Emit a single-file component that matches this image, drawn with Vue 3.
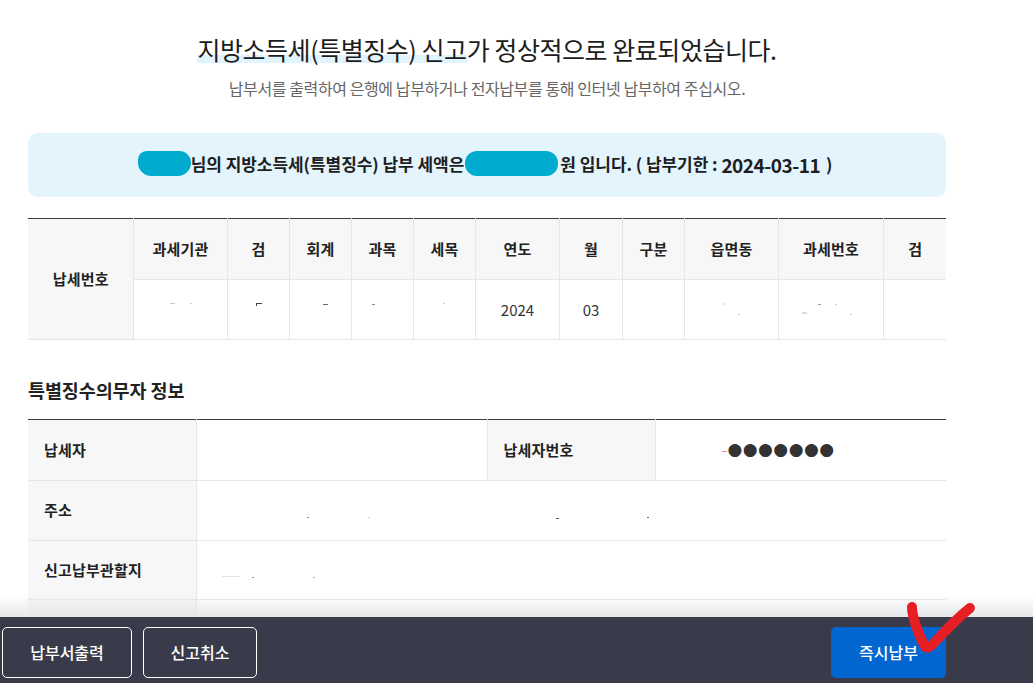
<script setup>
const heads = ['과세기관', '검', '회계', '과목', '세목', '연도', '월', '구분', '읍면동', '과세번호', '검']
const values = ['', '', '', '', '', '2024', '03', '', '', '', '']
const widths = [105, 94, 62, 62, 62, 62, 84, 63, 62, 94, 105, 63]
const specks = [
  [170, 303, 5, 1, '#ccc'], [190, 303, 2, 1, '#ccc'], [256, 303, 6, 1, '#444'], [256, 303, 1, 3, '#444'],
  [323, 304, 5, 1, '#666'], [372, 304, 3, 1, '#888'], [443, 303, 2, 1, '#ccc'], [724, 303, 1, 2, '#ccc'],
  [738, 314, 2, 1, '#bcd'], [802, 312, 5, 2, '#ddd'], [818, 304, 3, 1, '#999'], [835, 304, 2, 1, '#ccc'],
  [850, 314, 2, 1, '#ccc'], [307, 517, 2, 1, '#888'], [368, 517, 2, 1, '#ccc'], [556, 518, 3, 1, '#555'],
  [647, 517, 2, 1, '#667'], [222, 576, 18, 1, '#e4e4e4'], [252, 577, 2, 1, '#999'], [313, 577, 2, 1, '#bbb'],
  [722, 451, 5, 1, '#d99']
]
</script>

<template>
  <div class="page">
    <main class="content">
      <h1 class="title"><span class="mark">지방소득세(특별징수) 신고</span>가 정상적으로 완료되었습니다.</h1>
      <p class="sub">납부서를 출력하여 은행에 납부하거나 전자납부를 통해 인터넷 납부하여 주십시오.</p>

      <div class="notice">
        <span class="blob name"></span><span>님의 지방소득세(특별징수) 납부 세액은</span><span class="blob amount"></span><span>원 입니다. ( 납부기한 : </span><span class="date">2024-03-11</span><span class="paren"> )</span>
      </div>

      <table class="grid code">
        <colgroup>
          <col v-for="(w, i) in widths" :key="i" :style="{ width: w + 'px' }" />
        </colgroup>
        <tbody>
          <tr class="r1">
            <th rowspan="2">납세번호</th>
            <th v-for="(h, i) in heads" :key="i">{{ h }}</th>
          </tr>
          <tr class="r2">
            <td v-for="(v, i) in values" :key="i">{{ v }}</td>
          </tr>
        </tbody>
      </table>

      <h2 class="section">특별징수의무자 정보</h2>

      <table class="grid info">
        <colgroup>
          <col class="c1" /><col class="c2" /><col class="c3" /><col class="c4" />
        </colgroup>
        <tbody>
          <tr class="first-row">
            <th>납세자</th>
            <td></td>
            <th>납세자번호</th>
            <td class="masked"><span class="dots">●●●●●●●</span></td>
          </tr>
          <tr>
            <th>주소</th>
            <td colspan="3"></td>
          </tr>
          <tr class="third-row">
            <th>신고납부관할지</th>
            <td colspan="3"></td>
          </tr>
          <tr>
            <th></th>
            <td colspan="3"></td>
          </tr>
        </tbody>
      </table>
    </main>

    <i
      v-for="(s, i) in specks"
      :key="i"
      class="speck"
      :style="{ left: s[0] + 'px', top: s[1] + 'px', width: s[2] + 'px', height: s[3] + 'px', background: s[4] }"
    ></i>

    <footer class="bar">
      <div class="fade"></div>
      <div class="actions">
        <button class="btn outline first">납부서출력</button>
        <button class="btn outline second">신고취소</button>
        <button class="btn primary">즉시납부</button>
      </div>
    </footer>

    <svg class="check" width="80" height="70" viewBox="0 0 80 70" aria-hidden="true">
      <path d="M9 7 C9 18 17 38 22 46 C24 49 27 47 30 44 C40 33 52 20 67 8" fill="none" stroke="#e81e25" stroke-width="10" stroke-linecap="round" stroke-linejoin="round" />
    </svg>
  </div>
</template>

<style>
html, body { margin: 0; height: 683px; overflow: hidden; background: #fff; }
</style>

<style scoped>
.page {
  position: relative;
  width: 1033px;
  height: 683px;
  overflow: hidden;
  font-family: "Noto Sans CJK KR", "Noto Sans", sans-serif;
  color: #222;
}
.content {
  width: 918px;
  margin-left: 28px;
}
.speck { position: absolute; display: block; }
.title {
  margin: 0;
  padding-top: 30px;
  font-size: 25px;
  line-height: 38px;
  font-weight: 400;
  letter-spacing: -0.45px;
  text-align: center;
  color: #1c1c1c;
}
.mark {
  background: linear-gradient(#e1f3fd, #e1f3fd) no-repeat 0 24px / 100% 8px;
}
.sub {
  margin: 9px 0 0;
  font-size: 16px;
  line-height: 22px;
  letter-spacing: -0.4px;
  text-align: center;
  color: #666;
}
.notice {
  display: flex;
  align-items: center;
  justify-content: center;
  box-sizing: border-box;
  height: 64px;
  margin-top: 34px;
  padding-bottom: 3px;
  padding-right: 4px;
  border-radius: 10px;
  background: #e3f4fd;
  font-size: 17px;
  font-weight: 700;
  letter-spacing: -0.05px;
  white-space: pre;
  color: #1e1e1e;
}
.paren { margin-left: 2px; }
.blob {
  display: inline-block;
  background: #00abd0;
}
.name {
  width: 53px;
  height: 25px;
  border-radius: 11px 15px 17px 17px;
}
.amount {
  width: 93px;
  height: 25px;
  margin-left: 1px;
  margin-right: 2px;
  border-radius: 12px;
}
.date {
  font-size: 19px;
  font-weight: 700;
  letter-spacing: -0.5px;
  padding-top: 1px;
}
.grid {
  width: 918px;
  table-layout: fixed;
  border-collapse: collapse;
  border-top: 1px solid #3a3b4a;
}
.grid th, .grid td {
  padding: 0;
  border: 1px solid #e6e6e6;
  font-size: 15px;
}
.grid tr > :first-child { border-left: 0; }
.grid tr > :last-child { border-right: 0; }
.grid th {
  background: #f7f7f7;
  font-weight: 700;
  letter-spacing: 0.2px;
  color: #222;
}
.grid tr:first-child > * { border-top: 0; }
.code {
  margin-top: 21px;
  text-align: center;
}
.code th, .code td { padding-left: 1px; padding-bottom: 1px; }
.r1 { height: 61px; }
.r2 { height: 60px; }
.code td { color: #333; }
.section {
  margin: 0;
  padding-top: 37px;
  font-size: 18.5px;
  line-height: 26px;
  font-weight: 700;
  letter-spacing: -0.1px;
  color: #222;
}
.info { margin-top: 16px; }
.info .c1 { width: 168px; }
.info .c2 { width: 291px; }
.info .c3 { width: 168px; }
.info .c4 { width: 291px; }
.info tr { height: 60px; }
.info .first-row { height: 61px; }
.info .third-row { height: 59px; }
.info th {
  padding-left: 16px;
  padding-bottom: 2px;
  text-align: left;
}
.info .masked {
  padding-left: 72px;
  padding-bottom: 3px;
}
.dots {
  font-family: "DejaVu Sans", sans-serif;
  font-size: 17px;
  line-height: 20px;
  letter-spacing: 0.45px;
  color: #333;
}
.bar {
  position: absolute;
  left: 0;
  right: 0;
  bottom: 0;
  height: 66px;
  background: #3a3b4a;
}
.fade {
  position: absolute;
  left: 0;
  right: 0;
  bottom: 100%;
  height: 22px;
  background: linear-gradient(rgba(225, 226, 229, 0), #e6e7e9);
}
.actions {
  display: flex;
  gap: 11px;
  padding: 10px 87px 0 2px;
}
.btn {
  height: 51px;
  padding: 0 0 2px;
  border-radius: 5px;
  font-family: inherit;
  font-size: 16px;
  font-weight: 500;
  letter-spacing: 0;
  color: #fff;
}
.outline {
  background: transparent;
  border: 1px solid #fff;
}
.first { width: 130px; }
.second { width: 114px; }
.primary {
  width: 115px;
  margin-left: auto;
  border: 0;
  background: #0266d1;
}
.check {
  position: absolute;
  left: 903px;
  top: 600px;
}
</style>
